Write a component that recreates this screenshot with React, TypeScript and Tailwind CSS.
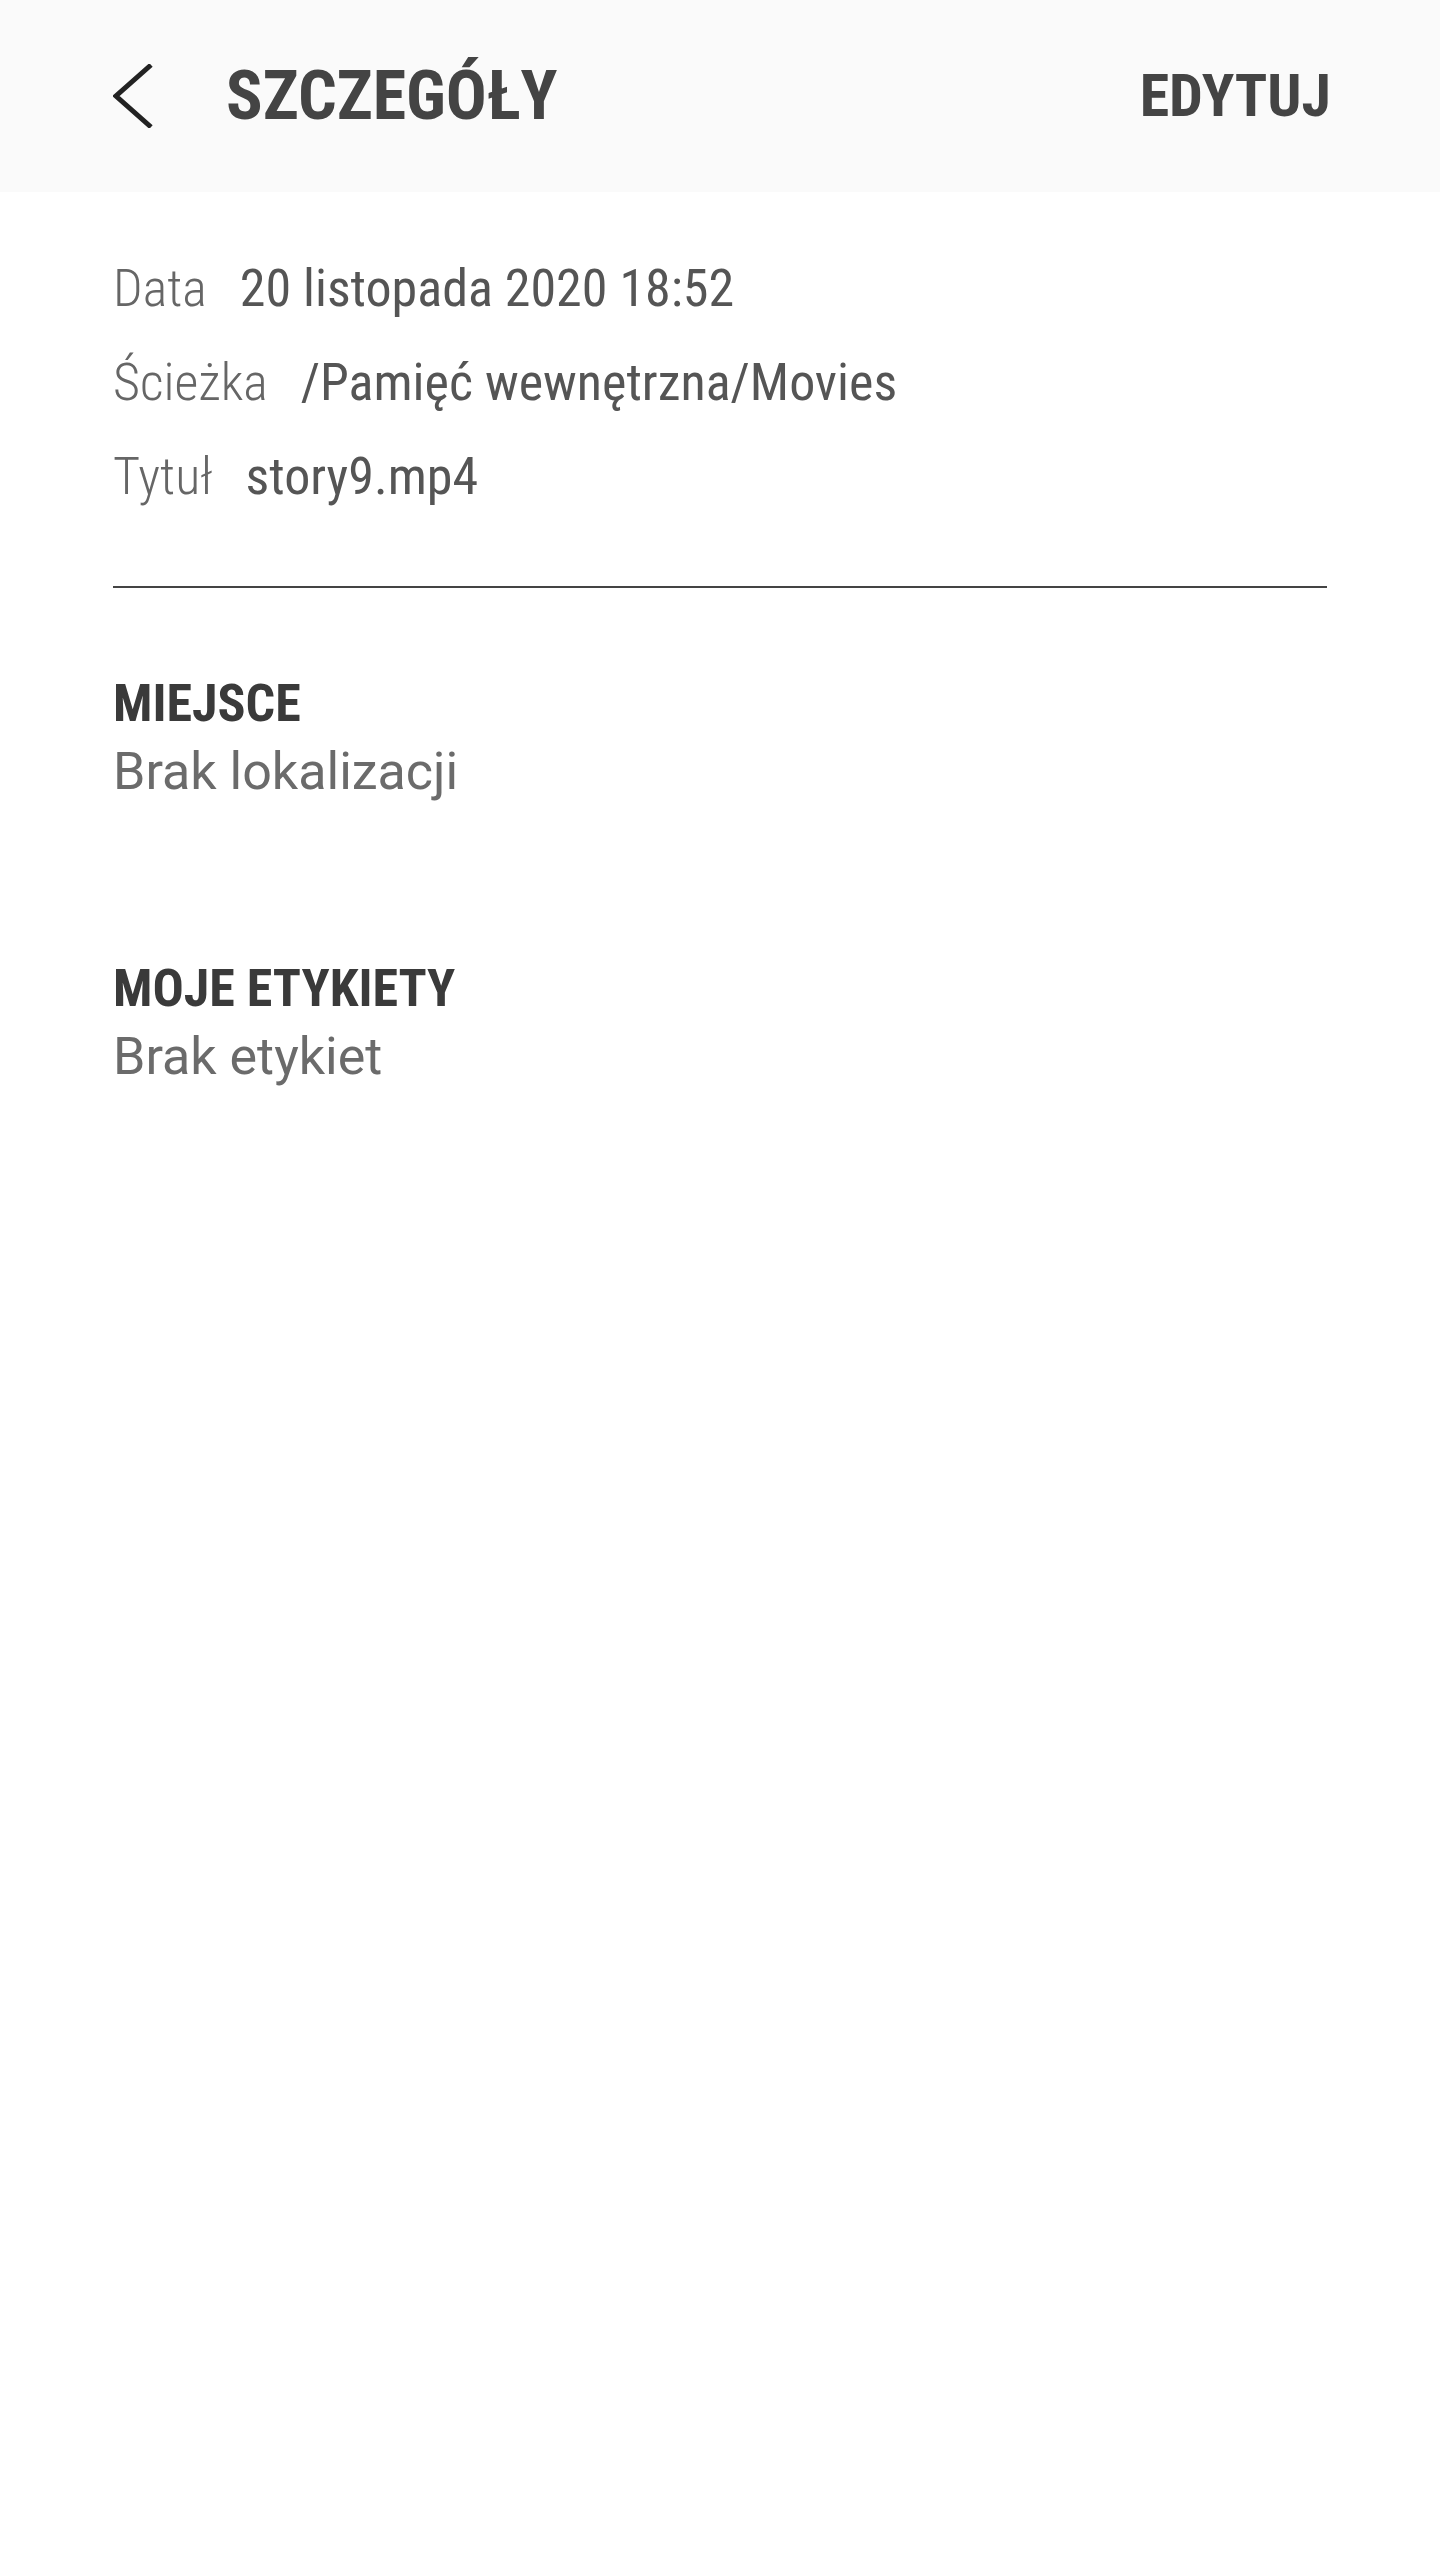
const rows = [
  { label: "Data", value: "20 listopada 2020 18:52" },
  { label: "Ścieżka", value: "/Pamięć wewnętrzna/Movies" },
  { label: "Tytuł", value: "story9.mp4" },
];

const App = () => {
  return (
    <div className="min-h-[2560px] w-[1440px] bg-white font-['Roboto_Condensed','Roboto',sans-serif]">
      <div className="flex h-[192px] items-center bg-[#fafafa] pl-[113px] pr-[109px]">
        <button className="flex h-[64px] w-[40px] items-center">
          <svg width="40" height="64" viewBox="0 0 40 64" fill="none">
            <path d="M38 1 L3 32 L38 63" stroke="#222" strokeWidth="5" />
          </svg>
        </button>
        <h1 className="ml-[73px] text-[68px] font-bold text-[#444]">SZCZEGÓŁY</h1>
        <button className="ml-auto text-[60px] font-bold text-[#444]">EDYTUJ</button>
      </div>

      <div className="px-[113px]">
        <div className="flex flex-col gap-[20px] pt-[60px]">
          {rows.map((r) => (
            <div key={r.label} className="flex items-baseline gap-[33px] leading-[74px]">
              <span className="text-[52px] font-light text-[#666]">{r.label}</span>
              <span className="text-[52px] text-[#555]">{r.value}</span>
            </div>
          ))}
        </div>
        <div className="mt-[72px] h-[2px] bg-[#444]" />

        <div className="mt-[86px]">
          <div className="text-[52px] font-bold leading-[60px] text-[#3a3a3a]">MIEJSCE</div>
          <div className="font-['Roboto',sans-serif] text-[52px] leading-[76px] text-[#6b6b6b]">Brak lokalizacji</div>
        </div>
        <div className="mt-[149px]">
          <div className="text-[52px] font-bold leading-[60px] text-[#3a3a3a]">MOJE ETYKIETY</div>
          <div className="font-['Roboto',sans-serif] text-[52px] leading-[76px] text-[#6b6b6b]">Brak etykiet</div>
        </div>
      </div>
    </div>
  );
};

export default App;
